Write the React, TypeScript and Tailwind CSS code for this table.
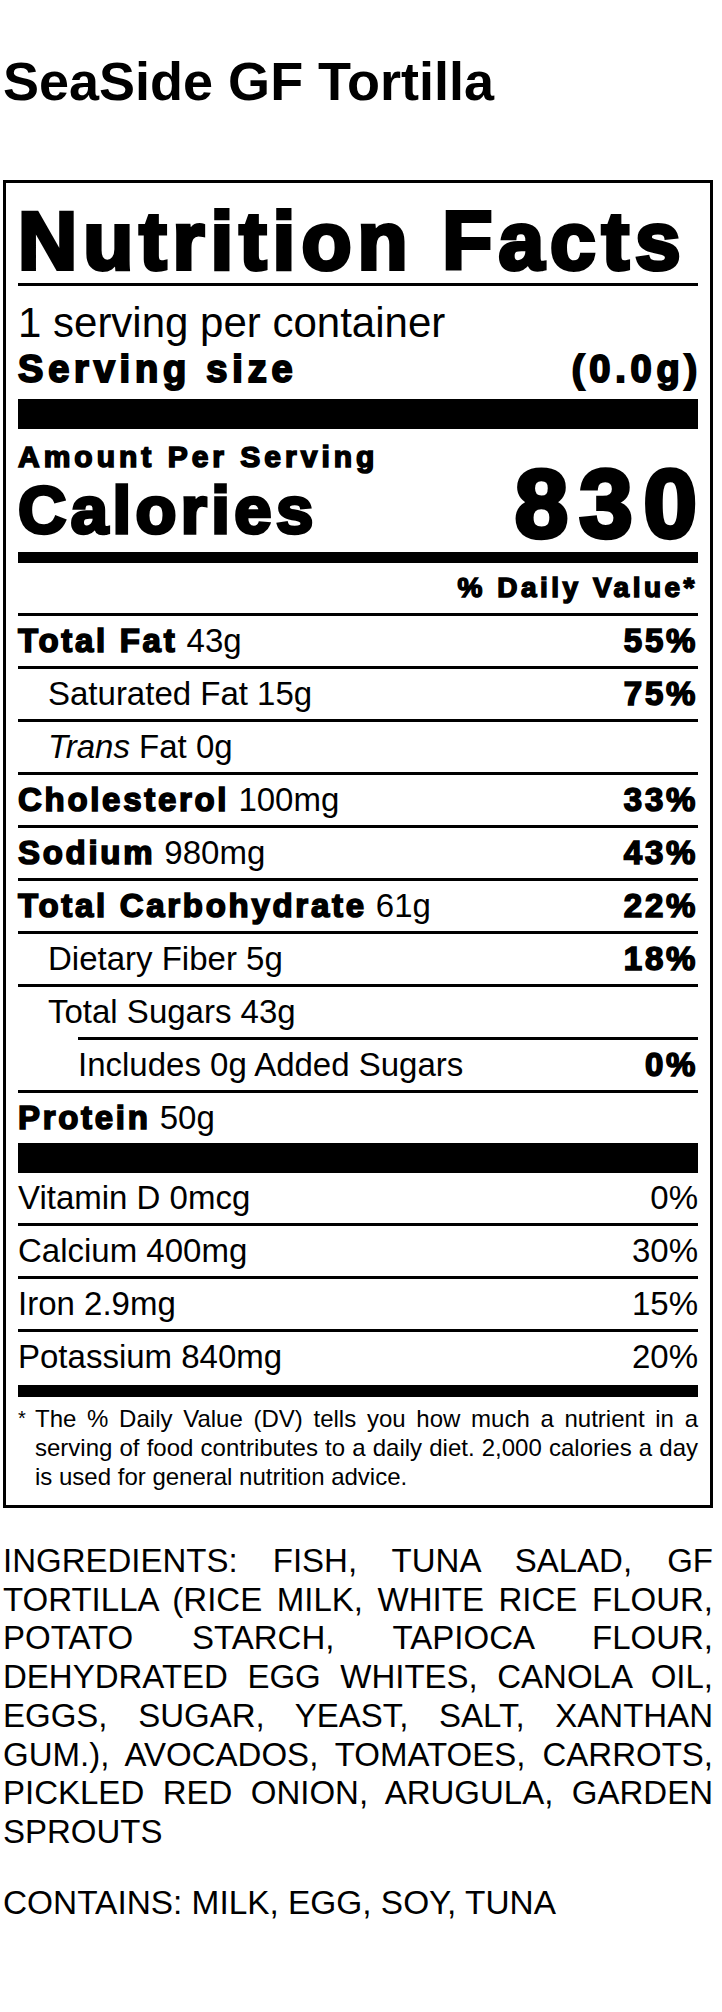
import React from "react";

const BLK = "font-bold tracking-[2.7px] [-webkit-text-stroke:1.6px_black]";

function Row({
  label,
  amount,
  dv,
  indent = "",
  border = true,
}: {
  label: React.ReactNode;
  amount?: React.ReactNode;
  dv?: string;
  indent?: string;
  border?: boolean;
}) {
  return (
    <div
      className={`flex justify-between text-[33px] leading-[50px] ${indent} ${
        border ? "border-b-[3px] border-black" : ""
      }`}
    >
      <div className="whitespace-nowrap">
        {label}
        {amount}
      </div>
      {dv ? <div className={BLK}>{dv}</div> : null}
    </div>
  );
}

function VRow({ label, dv, border = true }: { label: string; dv: string; border?: boolean }) {
  return (
    <div
      className={`flex justify-between text-[33px] leading-[50px] ${
        border ? "border-b-[3px] border-black" : ""
      }`}
    >
      <div>{label}</div>
      <div>{dv}</div>
    </div>
  );
}

export default function App() {
  return (
    <div className="w-[722px] min-h-[2012px] bg-white text-black font-['Liberation_Sans',Arial,Helvetica,sans-serif]">
      <div className="ml-[3px] w-[710px]">
        <h1 className="pt-[54px] text-[54px] leading-[54px] font-bold">SeaSide GF Tortilla</h1>

        <div className="mt-[72px] border-[3px] border-black px-[12px] pb-[14px]">
          <div className="pt-[15px] border-b-[3px] border-black">
            <div className="text-[82px] leading-[85px] font-bold tracking-[6px] [-webkit-text-stroke:4px_black] whitespace-nowrap">
              Nutrition Facts
            </div>
          </div>

          <div className="mt-[14px] text-[42px] leading-[46px]">1 serving per container</div>
          <div className="flex justify-between text-[38px] leading-[46px] font-bold tracking-[4.8px] [-webkit-text-stroke:2px_black]">
            <span>Serving size</span>
            <span className="-mr-[4px]">(0.0g)</span>
          </div>

          <div className="mt-[7px] h-[30px] bg-black" />

          <div className="mt-[11px] text-[30px] leading-[34px] font-bold tracking-[4px] [-webkit-text-stroke:1.6px_black]">
            Amount Per Serving
          </div>
          <div className="flex items-start justify-between">
            <div className="text-[67px] leading-[72px] font-bold tracking-[4.4px] [-webkit-text-stroke:3.4px_black]">
              Calories
            </div>
            <div className="-mt-[18px] -mr-[10px] text-[96px] leading-[96px] font-bold tracking-[11px] [-webkit-text-stroke:4.5px_black]">
              830
            </div>
          </div>
          <div className="h-[11px] bg-black" />

          <div className="border-b-[3px] border-black text-right text-[28px] leading-[50px] font-bold tracking-[3.5px] [-webkit-text-stroke:1.5px_black]">
            % Daily Value*
          </div>

          <Row label={<span className={BLK}>Total Fat</span>} amount=" 43g" dv="55%" />
          <Row indent="pl-[30px]" label="Saturated Fat 15g" dv="75%" />
          <Row
            indent="pl-[30px]"
            label={
              <>
                <i>Trans</i> Fat 0g
              </>
            }
          />
          <Row label={<span className={BLK}>Cholesterol</span>} amount=" 100mg" dv="33%" />
          <Row label={<span className={BLK}>Sodium</span>} amount=" 980mg" dv="43%" />
          <Row label={<span className={BLK}>Total Carbohydrate</span>} amount=" 61g" dv="22%" />
          <Row indent="pl-[30px]" label="Dietary Fiber 5g" dv="18%" />
          <Row indent="pl-[30px]" label="Total Sugars 43g" border={false} />
          <div className="ml-[60px] h-[3px] bg-black" />
          <Row indent="pl-[60px]" label="Includes 0g Added Sugars" dv="0%" />
          <Row label={<span className={BLK}>Protein</span>} amount=" 50g" border={false} />

          <div className="h-[30px] bg-black" />

          <VRow label="Vitamin D 0mcg" dv="0%" />
          <VRow label="Calcium 400mg" dv="30%" />
          <VRow label="Iron 2.9mg" dv="15%" />
          <VRow label="Potassium 840mg" dv="20%" border={false} />

          <div className="mt-[3px] h-[12px] bg-black" />

          <div className="mt-[7px] flex text-[24px] leading-[29px]">
            <span className="w-[17px] shrink-0 text-[20px]">*</span>
            <p className="flex-1 text-justify">
              The % Daily Value (DV) tells you how much a nutrient in a serving of food contributes to a
              daily diet. 2,000 calories a day is used for general nutrition advice.
            </p>
          </div>
        </div>

        <p className="mt-[34px] text-[33px] leading-[38.7px] text-justify">
          INGREDIENTS: FISH, TUNA SALAD, GF TORTILLA (RICE MILK, WHITE RICE FLOUR, POTATO STARCH, TAPIOCA
          FLOUR, DEHYDRATED EGG WHITES, CANOLA OIL, EGGS, SUGAR, YEAST, SALT, XANTHAN GUM.), AVOCADOS,
          TOMATOES, CARROTS, PICKLED RED ONION, ARUGULA, GARDEN SPROUTS
        </p>
        <p className="mt-[32px] text-[33.4px] leading-[38.7px]">CONTAINS: MILK, EGG, SOY, TUNA</p>
      </div>
    </div>
  );
}
